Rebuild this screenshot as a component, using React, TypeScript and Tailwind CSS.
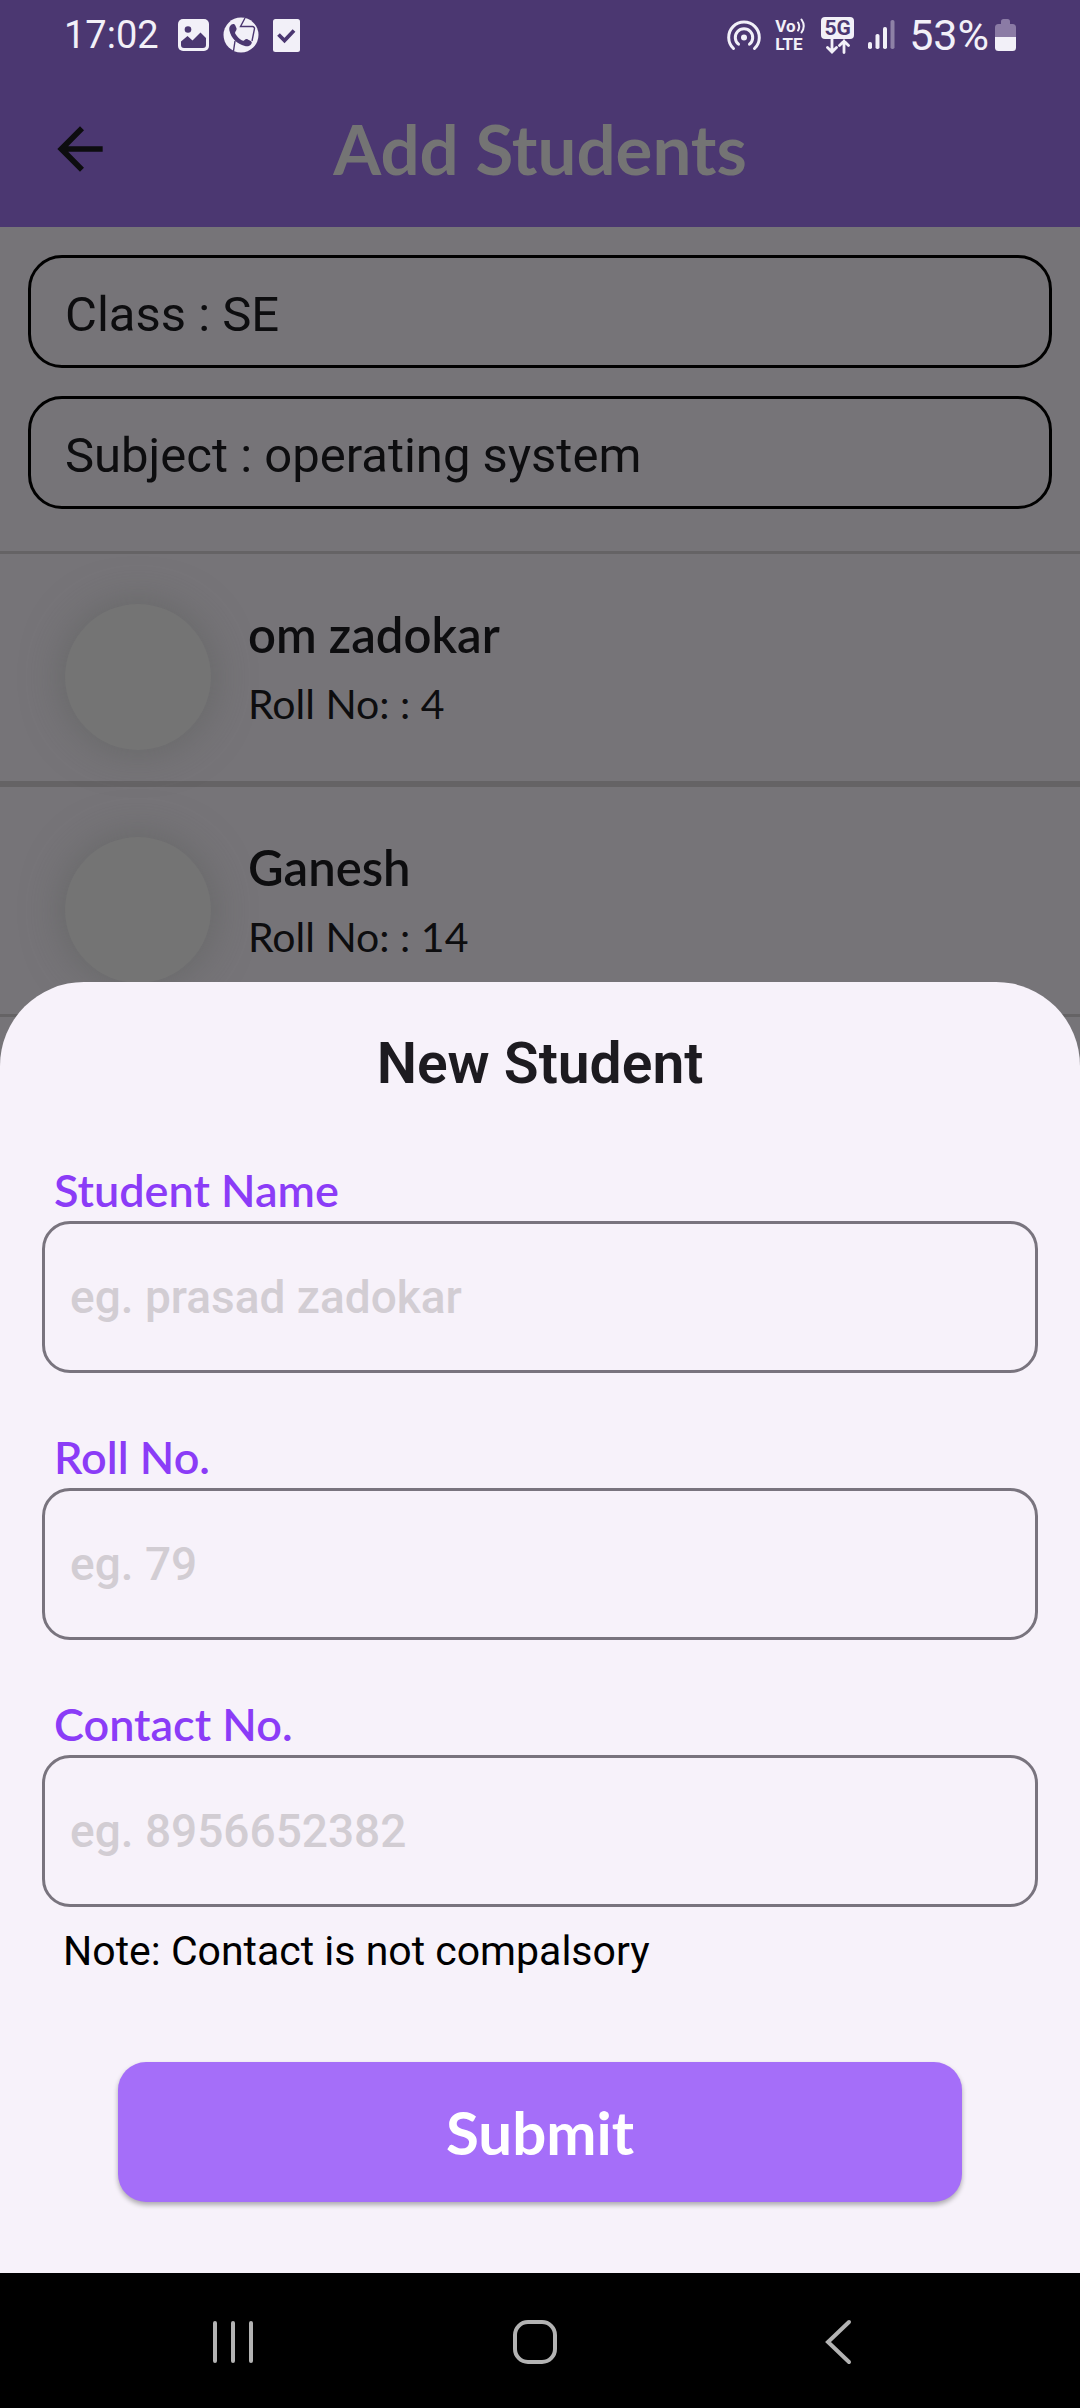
import type { ReactNode } from "react";

const students = [
  { name: "om zadokar", roll: "4" },
  { name: "Ganesh", roll: "14" },
];

const fields = [
  { id: "student-name", label: "Student Name", hint: "eg. prasad zadokar", type: "text" },
  { id: "roll-no", label: "Roll No.", hint: "eg. 79", type: "text" },
  { id: "contact-no", label: "Contact No.", hint: "eg. 8956652382", type: "tel" },
];

function ImageIcon() {
  return (
    <svg width="31" height="32" viewBox="0 0 31 32" aria-hidden="true">
      <rect width="31" height="32" rx="5" fill="#f2f0f8" />
      <circle cx="10" cy="10.500" r="3.300" fill="#4b3771" />
      <path d="M3 22.500 9.500 17l5 4.500L22.500 13.500l5.500 5.500v7a3 3 0 0 1-3 3H6a3 3 0 0 1-3-3z" fill="#4b3771" />
    </svg>
  );
}

function CallIcon() {
  return (
    <svg width="36" height="36" viewBox="0 0 36 36" aria-hidden="true">
      <circle cx="18" cy="18" r="17.500" fill="#f2f0f8" />
      <path d="M22 1 17.500 9.500h12a2 2 0 0 1 2 2.200L29 24M12 24l-1.500 10" fill="none" stroke="#4b3771" strokeWidth="1.400" />
      <path
        d="M8.500 7.500c1.500-1 3-.7 3.700.7l1.300 3c.4 1-.2 2.200-1 3.300-.6.900-.5 1.700 0 2.500 1.500 2.600 3.500 4.700 6.200 6.300 1 .6 1.800.6 2.600-.1 1.200-1 2.300-1.400 3.500-.8l3 1.600c1.300.8 1.300 2 .3 3.300-1.500 1.900-3.700 2.400-6.200 1.700C14 27 8.200 21.200 6.400 13.500c-.5-2.500.2-4.600 2.100-6z"
        fill="#4b3771"
      />
    </svg>
  );
}

function TaskIcon() {
  return (
    <svg width="27" height="33" viewBox="0 0 27 33" aria-hidden="true">
      <rect width="27" height="33" rx="2.500" fill="#f2f0f8" />
      <path d="m5.500 15.500 6 6 9.500-10" fill="none" stroke="#4b3771" strokeWidth="3.800" />
    </svg>
  );
}

function HotspotIcon() {
  return (
    <svg width="34" height="31" viewBox="0 0 34 31" fill="none" stroke="#f2f0f8" strokeWidth="3" strokeLinecap="round" aria-hidden="true">
      <circle cx="17" cy="17.500" r="3" fill="#f2f0f8" stroke="none" />
      <path d="M11.500 24.200a8.700 8.700 0 1 1 11 0" />
      <path d="M6.500 28.500a15.300 15.300 0 1 1 21 0" />
    </svg>
  );
}

function VolteIcon() {
  return (
    <span className="flex w-[32px] flex-col font-[Roboto] text-[17px] leading-[18px] font-bold">
      <span className="flex items-center">
        Vo
        <svg width="10" height="16" viewBox="0 0 10 16" fill="none" stroke="currentColor" strokeWidth="2" strokeLinecap="round" aria-hidden="true">
          <path d="M2 4.500q2.500 4 0 8M5.500 1.500q4.500 6.500 0 13" />
        </svg>
      </span>
      <span>LTE</span>
    </span>
  );
}

function FiveGIcon() {
  return (
    <span className="flex w-[33px] flex-col items-center">
      <span className="w-full rounded bg-[#f2f0f8] text-center font-[Roboto] text-[21px] leading-[22px] font-bold text-[#4b3771]">
        5G
      </span>
      <svg width="24" height="15" viewBox="0 0 24 15" fill="none" stroke="currentColor" strokeWidth="2.800" strokeLinecap="round" aria-hidden="true">
        <path d="M6 0v12.500M1.500 8.500 6 13l4.500-4.500M18 13.500V2M13.500 6.500 18 2l4.500 4.500" />
      </svg>
    </span>
  );
}

function SignalIcon() {
  return (
    <svg width="27" height="30" viewBox="0 0 27 30" fill="#f2f0f8" aria-hidden="true">
      <rect x="0" y="22" width="4" height="7" rx="1.800" />
      <rect x="7.500" y="14" width="4" height="15" rx="1.800" />
      <rect x="15" y="7" width="4" height="22" rx="1.800" />
      <rect x="22.500" y="0" width="4" height="29" rx="1.800" opacity=".4" />
    </svg>
  );
}

function BatteryIcon() {
  return (
    <svg width="21" height="32" viewBox="0 0 21 32" aria-hidden="true">
      <path d="M6 5V2.500A2.500 2.500 0 0 1 8.500 0h4A2.500 2.500 0 0 1 15 2.500V5h2.500A3.500 3.500 0 0 1 21 8.500V18H0V8.500A3.500 3.500 0 0 1 3.500 5z" fill="#8b7ba5" />
      <path d="M0 18h21v10.500a3.500 3.500 0 0 1-3.500 3.500h-14A3.500 3.500 0 0 1 0 28.500z" fill="#f2f0f8" />
    </svg>
  );
}

function StatusBar() {
  return (
    <div className="flex h-[70px] items-center justify-between px-16 font-[Roboto] leading-[48px] text-[#f2f0f8]">
      <div className="flex items-center">
        <span className="w-[114px] text-[38px]">17:02</span>
        <div className="flex items-center gap-3.5">
          <ImageIcon />
          <CallIcon />
          <TaskIcon />
        </div>
      </div>
      <div className="flex items-center">
        <div className="flex items-center gap-3.5 pr-3.5">
          <HotspotIcon />
          <VolteIcon />
          <FiveGIcon />
          <SignalIcon />
        </div>
        <span className="pr-1.5 text-[43px]">53%</span>
        <BatteryIcon />
      </div>
    </div>
  );
}

function InfoBox({ children }: { children: ReactNode }) {
  return (
    <div className="flex h-[113px] items-center rounded-[34px] border-3 border-black px-[34px] pt-1.5 font-[Roboto] text-[49px] leading-[56px] text-[#0d0d0f]">
      {children}
    </div>
  );
}

export default function App() {
  return (
    <div className="flex min-h-screen flex-col bg-[#767478] font-[Lato,sans-serif]">
      <header className="bg-[#4b3771]">
        <StatusBar />
        <div className="grid h-[157px] grid-cols-[1fr_auto_1fr] items-center px-[46px]">
          <button type="button" aria-label="Back" className="justify-self-start">
            <svg width="68" height="68" viewBox="0 0 24 24" fill="#0d0d0f" aria-hidden="true">
              <path d="M20 11H7.830l5.590-5.590L12 4l-8 8 8 8 1.410-1.410L7.830 13H20v-2z" />
            </svg>
          </button>
          <h1 className="text-[69px] leading-[80px] font-bold text-[#747474]">Add Students</h1>
        </div>
      </header>

      <div className="grid flex-1 grid-cols-1">
        <main className="col-start-1 row-start-1">
          <div className="flex flex-col gap-7 px-7 pt-7 pb-[42px]">
            <InfoBox>Class : SE</InfoBox>
            <InfoBox>Subject : operating system</InfoBox>
          </div>
          <ul>
            {students.map((s) => (
              <li key={s.roll} className="flex h-[233px] gap-[37px] border-y-3 border-[#656365] px-[65px] pt-[50px]">
                <div className="size-[146px] shrink-0 rounded-full bg-[#747474] shadow-[0_0_42px_rgba(90,94,90,0.6)]" />
                <div className="flex flex-col gap-3">
                  <p className="text-[49px] leading-[60px] font-semibold text-[#0d0d0f]">{s.name}</p>
                  <p className="text-[41px] leading-[56px] text-[#0d0d0f]">Roll No: : {s.roll}</p>
                </div>
              </li>
            ))}
          </ul>
        </main>

        <form
          role="dialog"
          aria-labelledby="sheet-title"
          className="z-10 col-start-1 row-start-1 flex flex-col self-end rounded-t-[84px] bg-[#f7f2fa] px-[42px] pt-[50px] pb-[71px]"
          onSubmit={(e) => e.preventDefault()}
        >
          <h2 id="sheet-title" className="text-center font-[Roboto] text-[57px] leading-[64px] font-semibold text-[#1d1b20]">
            New Student
          </h2>
          <div className="flex flex-col gap-[60px] pt-[70px]">
            {fields.map((f) => (
              <div key={f.id} className="flex flex-col gap-[7px]">
                <label htmlFor={f.id} className="px-3 text-[45px] leading-[48px] font-semibold text-[#8b3cf7]">
                  {f.label}
                </label>
                <input
                  id={f.id}
                  type={f.type}
                  placeholder={f.hint}
                  className="h-[152px] w-full rounded-[28px] border-3 border-[#79747e] bg-transparent px-[25px] font-[Roboto] text-[46px] font-medium text-[#1d1b20] placeholder:text-[#d2cdd3]"
                />
              </div>
            ))}
          </div>
          <p className="px-[21px] pt-5 font-[Roboto] text-[41px] leading-[48px] text-black">
            Note: Contact is not compalsory
          </p>
          <div className="px-[76px] pt-[87px]">
            <button
              type="submit"
              className="h-[140px] w-full rounded-[28px] bg-[#a56ef9] text-[60px] leading-[64px] font-bold text-white shadow-[0_3px_5px_rgba(0,0,0,0.3)]"
            >
              Submit
            </button>
          </div>
        </form>
      </div>

      <nav className="flex h-[135px] items-center justify-between bg-black px-[211px] pt-0.5 text-[#b3b3b3]">
        <button type="button" aria-label="Recent apps">
          <svg width="44" height="48" viewBox="0 0 44 48" stroke="currentColor" strokeWidth="4" strokeLinecap="round">
            <path d="M4 5v38M22 5v38M40 5v38" />
          </svg>
        </button>
        <button type="button" aria-label="Home">
          <svg width="48" height="48" viewBox="0 0 48 48" fill="none" stroke="currentColor" strokeWidth="4">
            <rect x="4" y="4" width="40" height="40" rx="13" />
          </svg>
        </button>
        <button type="button" aria-label="Back">
          <svg width="54" height="48" viewBox="0 0 54 48" fill="none" stroke="currentColor" strokeWidth="4" strokeLinecap="round">
            <path d="M34 4 13 24l21 20" />
          </svg>
        </button>
      </nav>
    </div>
  );
}
